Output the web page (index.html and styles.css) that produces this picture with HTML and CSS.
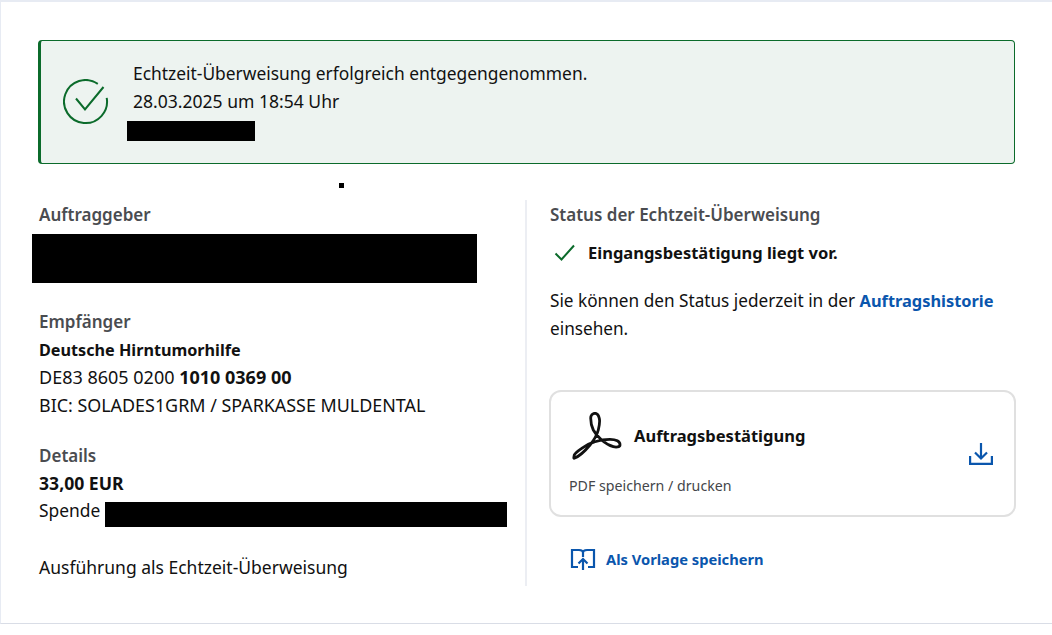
FILE: index.html
```html
<!DOCTYPE html>
<html lang="de">
<head>
<meta charset="utf-8">
<title>Echtzeit-Überweisung</title>
<link rel="stylesheet" href="styles.css">
</head>
<body>
<main class="page">
  <section class="notice">
    <svg class="notice-icon" width="46" height="46" viewBox="0 0 46 46" fill="none" stroke="#0b6b2b" stroke-width="2">
      <path d="M34.8 4.9 A21.5 21.5 0 1 0 43.7 18.8"/>
      <path d="M13 19.5 L22 30.5 L40.5 8"/>
    </svg>
    <div class="notice-text">
      <p class="notice-line">Echtzeit-Überweisung erfolgreich entgegengenommen.</p>
      <p class="notice-line notice-date">28.03.2025 um 18:54 Uhr</p>
      <div class="redact redact-notice"></div>
    </div>
  </section>
  <div class="redact speck"></div>
  <div class="columns">
    <div class="col-left">
      <h2 class="label">Auftraggeber</h2>
      <div class="redact redact-sender"></div>
      <h2 class="label label-recipient">Empfänger</h2>
      <p class="line"><strong class="name">Deutsche Hirntumorhilfe</strong></p>
      <p class="line line-iban">DE83 8605 0200 <strong class="digits">1010 0369 00</strong></p>
      <p class="line line-caps">BIC: SOLADES1GRM / SPARKASSE MULDENTAL</p>
      <h2 class="label label-details">Details</h2>
      <p class="line"><strong class="amount">33,00 EUR</strong></p>
      <div class="purpose"><span class="purpose-text">Spende</span><div class="redact redact-purpose"></div></div>
      <p class="line exec">Ausführung als Echtzeit-Überweisung</p>
    </div>
    <div class="col-right">
      <h2 class="label">Status der Echtzeit-Überweisung</h2>
      <div class="status">
        <svg width="22" height="18" viewBox="0 0 22 18" fill="none" stroke="#0b6b2b" stroke-width="2"><path d="M1.5 9.5 L7.5 15.5 L20 1.5"/></svg>
        <strong>Eingangsbestätigung liegt vor.</strong>
      </div>
      <p class="hint">Sie können den Status jederzeit in der <a class="link" href="#">Auftragshistorie</a> einsehen.</p>
      <div class="card">
        <div class="card-main">
          <div class="card-head">
            <svg width="50" height="50" viewBox="0 0 50 50" fill="none" stroke="#111" stroke-width="2.8" stroke-linejoin="round">
              <path d="M2.3 46.3 C8 44 13 39 18 33 C22 28 25 23 26.3 18 C27.5 13 28 9 27.3 6.3 C26.5 3 25 1.3 23 1.3 C20.5 1.3 18.7 3.5 18.7 6.3 C18.7 11 19.5 14.5 21.3 18 C23.5 22 26 25 29.7 28 C33 31 37 33.5 41.3 34.7 C44 35.4 47.8 35.2 48 33 C48.2 29.5 44 27.3 38 27.3 C32 27.3 27 28.3 23 29.7 C18 31.3 13.5 33.5 9.7 36.3 C6.5 38.5 3 41 2.3 43 C1.9 45 1.5 46.6 2.3 46.3 Z"/>
            </svg>
            <strong class="card-title">Auftragsbestätigung</strong>
          </div>
          <p class="card-sub">PDF speichern / drucken</p>
        </div>
        <svg class="card-dl" width="24" height="22" viewBox="0 0 24 22" fill="none" stroke="#0a56ad" stroke-width="2.2">
          <path d="M12 0 V15 M6 9.5 L12 15.5 L18 9.5"/>
          <path d="M1.1 13 V20.9 H22.9 V13"/>
        </svg>
      </div>
      <a class="save" href="#">
        <svg width="26" height="24" viewBox="0 0 26 24" fill="none" stroke="#0a56ad" stroke-width="2.2">
          <path d="M8 20 H2 V3 H9 C11 3 13 4 13 6 C13 4 15 3 17 3 H24 V20 H18"/>
          <path d="M13 6 V10"/>
          <path d="M13 23 V12 M8.5 16.5 L13 12 L17.5 16.5"/>
        </svg>
        <span>Als Vorlage speichern</span>
      </a>
    </div>
  </div>
</main>
</body>
</html>
```
FILE: styles.css
```css
* { box-sizing: border-box; }
html, body { margin: 0; padding: 0; }
body {
  width: 1052px;
  height: 635px;
  background: #fff;
  color: #111;
  font-family: "Noto Sans", "Open Sans", sans-serif;
  font-size: 17.4px;
  overflow: hidden;
}
p, h2 { margin: 0; }
.page {
  height: 624px;
  border-top: 2px solid #e7ebf3;
  border-left: 1px solid #e7ebf3;
  border-bottom: 1px solid #d9dde6;
  padding: 38px 37px 0;
  position: relative;
}
.notice {
  display: flex;
  align-items: center;
  height: 124px;
  background: #edf3f0;
  border: 1px solid #0b6b2b;
  border-left-width: 3px;
  border-radius: 4px;
  padding-left: 22px;
}
.notice-icon { flex: none; }
.notice-text { margin-left: 24px; align-self: flex-start; padding-top: 18px; }
.notice-line { line-height: 28px; }
.notice-date { font-size: 17.55px; }
.redact { background: #000; }
.redact-notice { width: 128px; height: 20px; margin: 6px 0 0 -6px; }
.speck { position: absolute; left: 338px; top: 181px; width: 5px; height: 5px; }
.columns { display: flex; margin-top: 36px; }
.col-left { flex: none; width: 489px; height: 386px; border-right: 2px solid #eceef3; padding: 1px 0 0 1px; }
.col-right { flex: none; padding: 1px 0 0 23px; width: 489px; }
.label { font-size: 17px; font-weight: 600; color: #4a4c50; line-height: 28px; }
.redact-sender { width: 445px; height: 49px; margin: 5px 0 0 -7px; }
.label-recipient { margin-top: 25px; }
.label-details { margin-top: 22px; }
.line { height: 28px; line-height: 26px; font-size: 17.5px; }
.line-caps { font-size: 17.9px; }
.line-iban { font-size: 18px; }
strong { font-size: 16.5px; font-weight: 700; line-height: 1; }
.name { font-size: 16.2px; }
.digits { font-size: 18px; }
.amount { font-size: 17.6px; }
.purpose { display: flex; align-items: flex-start; height: 28px; }
.purpose-text { line-height: 25px; }
.redact-purpose { width: 402px; height: 25px; margin: 4px 0 0 5px; flex: none; }
.exec { margin-top: 28px; }
.status { display: flex; align-items: center; gap: 12px; height: 28px; margin-top: 10px; padding-left: 4px; }
.hint { margin-top: 20px; line-height: 28px; width: 460px; font-size: 17.2px; }
.link { color: #0a56ad; font-size: 16.4px; font-weight: 700; text-decoration: none; line-height: 1; }
.card {
  display: flex;
  justify-content: space-between;
  align-items: center;
  width: 467px;
  height: 127px;
  margin: 47px 0 0 -1px;
  border: 2px solid #e0e0e0;
  border-radius: 12px;
  padding: 0 21px 0 18px;
}
.card-head { display: flex; align-items: center; gap: 12px; margin-left: 3px; }
.card-sub { font-size: 14.2px; color: #44464a; margin-top: 14px; line-height: 20px; }
.save { display: flex; align-items: center; gap: 10px; margin: 30px 0 0 20px; color: #0a56ad; font-size: 14.7px; font-weight: 700; text-decoration: none; }
```
